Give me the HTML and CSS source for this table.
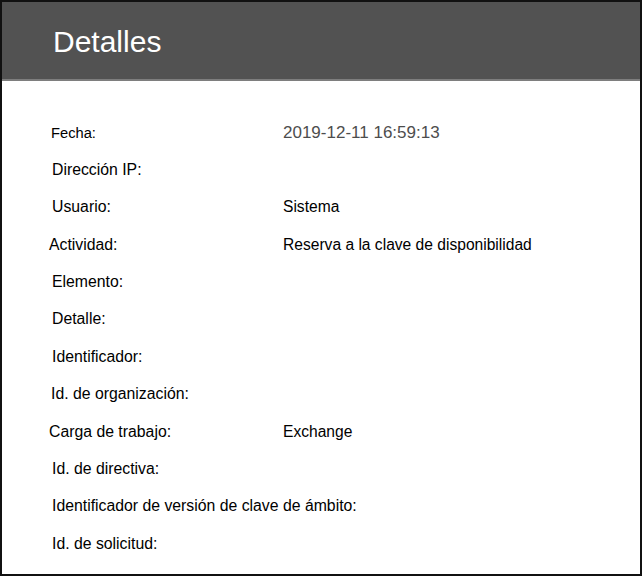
FILE: index.html
```html
<!DOCTYPE html>
<html lang="es">
<head>
<meta charset="utf-8">
<title>Detalles</title>
<link rel="stylesheet" href="styles.css">
</head>
<body>
<div class="panel">
  <header class="panel-header">
    <h1 class="panel-title">Detalles</h1>
  </header>
  <div class="details">
    <div class="label label-small">Fecha:</div><div class="value value-date">2019-12-11 16:59:13</div>
    <div class="label">Dirección IP:</div><div class="value"></div>
    <div class="label">Usuario:</div><div class="value">Sistema</div>
    <div class="label label-shift">Actividad:</div><div class="value">Reserva a la clave de disponibilidad</div>
    <div class="label">Elemento:</div><div class="value"></div>
    <div class="label">Detalle:</div><div class="value"></div>
    <div class="label">Identificador:</div><div class="value"></div>
    <div class="label label-nudge">Id. de organización:</div><div class="value"></div>
    <div class="label label-shift">Carga de trabajo:</div><div class="value">Exchange</div>
    <div class="label">Id. de directiva:</div><div class="value"></div>
    <div class="label">Identificador de versión de clave de ámbito:</div><div class="value"></div>
    <div class="label">Id. de solicitud:</div><div class="value"></div>
  </div>
</div>
</body>
</html>
```

FILE: styles.css
```css
html, body {
  margin: 0;
  padding: 0;
  background: #ffffff;
}
body {
  font-family: "Liberation Sans", Arial, sans-serif;
  color: #000;
}
.panel {
  width: 642px;
  height: 576px;
  box-sizing: border-box;
  border: 2px solid #111;
  background: #fff;
  display: flex;
  flex-direction: column;
}
.panel-header {
  height: 77px;
  background: #525252;
  border-bottom: 2px solid #7e7e7e;
  display: flex;
  align-items: center;
  padding-left: 51px;
}
.panel-title {
  margin: 0;
  font-weight: normal;
  font-size: 30px;
  color: #fff;
  line-height: 1;
  padding-top: 2px;
}
.details {
  display: grid;
  grid-template-columns: 231px 1fr;
  grid-auto-rows: 37.36px;
  padding: 33px 0 0 50px;
  align-items: center;
}
.label {
  font-size: 15.8px;
  white-space: nowrap;
}
.label-small {
  font-size: 14.7px;
  margin-left: -1px;
}
.label-shift {
  margin-left: -3px;
}
.label-nudge {
  margin-left: -1px;
}
.value {
  font-size: 15.6px;
  white-space: nowrap;
}
.value-date {
  font-size: 17px;
  color: #4d4d4d;
}
```
